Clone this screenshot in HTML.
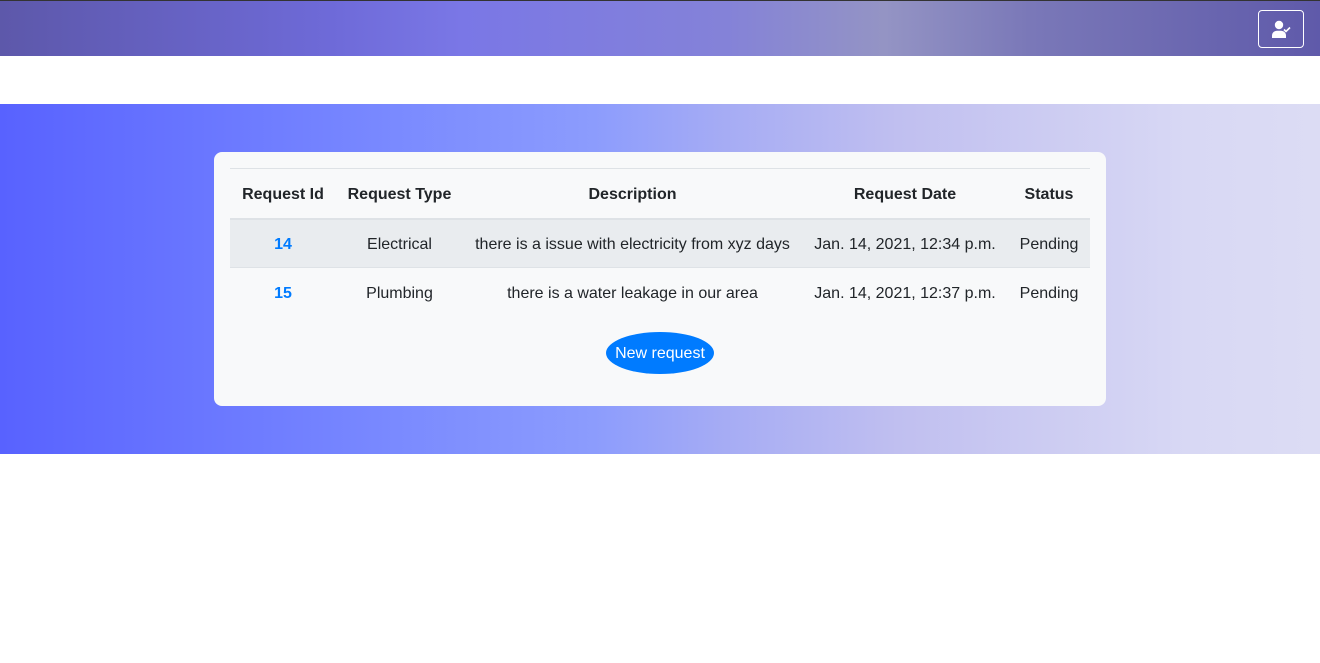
<!DOCTYPE html>
<html><head><style>
*{margin:0;padding:0;box-sizing:border-box}
body{width:1320px;height:663px;background:#fff;font-family:"Liberation Sans",sans-serif;font-size:16px;color:#212529;position:relative;overflow:hidden}
.nav{position:absolute;top:0;left:0;width:1320px;height:56px;border-top:1px solid #333;background:linear-gradient(90deg,#5d58aa 0%,#6e6ad8 25%,#7a77e6 35%,#8482d8 55%,#9494c4 67%,#7a78b8 78%,#5f5aaa 100%)}
.btn{position:absolute;left:1258px;top:9px;width:46px;height:38px;border:1px solid #fff;border-radius:4px}
.hero{position:absolute;top:104px;left:0;width:1320px;height:350px;background:linear-gradient(90deg,#5862ff 0%,#7a8aff 30%,#8c9cfd 45%,#a6acf4 55%,#c0bff0 68%,#d8d8f4 90%,#dcdcf4 100%)}
.card{position:absolute;left:214px;top:152px;width:892px;height:254px;background:#f8f9fa;border-radius:8px}
table{position:absolute;left:16px;top:16px;width:860px;border-collapse:collapse;text-align:center}
th{font-weight:bold;height:50px;padding-top:4px;border-top:1px solid #dee2e6;border-bottom:2px solid #dee2e6}
td{height:49px;padding-top:3px;border-bottom:1px solid #dee2e6}
tr.g td{background:#e9ecef}
tr.l td{border-bottom:none}
a{color:#007bff;font-weight:bold;text-decoration:none}
.nr{position:absolute;left:392px;top:180px;width:108px;height:42px;border-radius:50%;background:#007bff;color:#fff;text-align:center;line-height:44px}
</style></head><body>
<div class="nav"><div class="btn"><svg width="46" height="38" viewBox="0 0 46 38"><circle cx="20" cy="14" r="4.2" fill="#fff"/><path d="M13 27v-2.5c0-3 2.5-4.8 5-4.8h4c2.5 0 5 1.8 5 4.8V27z" fill="#fff"/><path d="M25 18.5l2 2 4-4" stroke="#fff" stroke-width="1.6" fill="none"/></svg></div></div>
<div class="hero"></div>
<div class="card">
<table>
<colgroup><col style="width:106px"><col style="width:127px"><col style="width:339px"><col style="width:206px"><col style="width:82px"></colgroup>
<tr><th>Request Id</th><th>Request Type</th><th>Description</th><th>Request Date</th><th>Status</th></tr>
<tr class="g"><td><a>14</a></td><td>Electrical</td><td>there is a issue with electricity from xyz days</td><td>Jan. 14, 2021, 12:34 p.m.</td><td>Pending</td></tr>
<tr class="l"><td><a>15</a></td><td>Plumbing</td><td>there is a water leakage in our area</td><td>Jan. 14, 2021, 12:37 p.m.</td><td>Pending</td></tr>
</table>
<div class="nr">New request</div>
</div>
</body></html>
